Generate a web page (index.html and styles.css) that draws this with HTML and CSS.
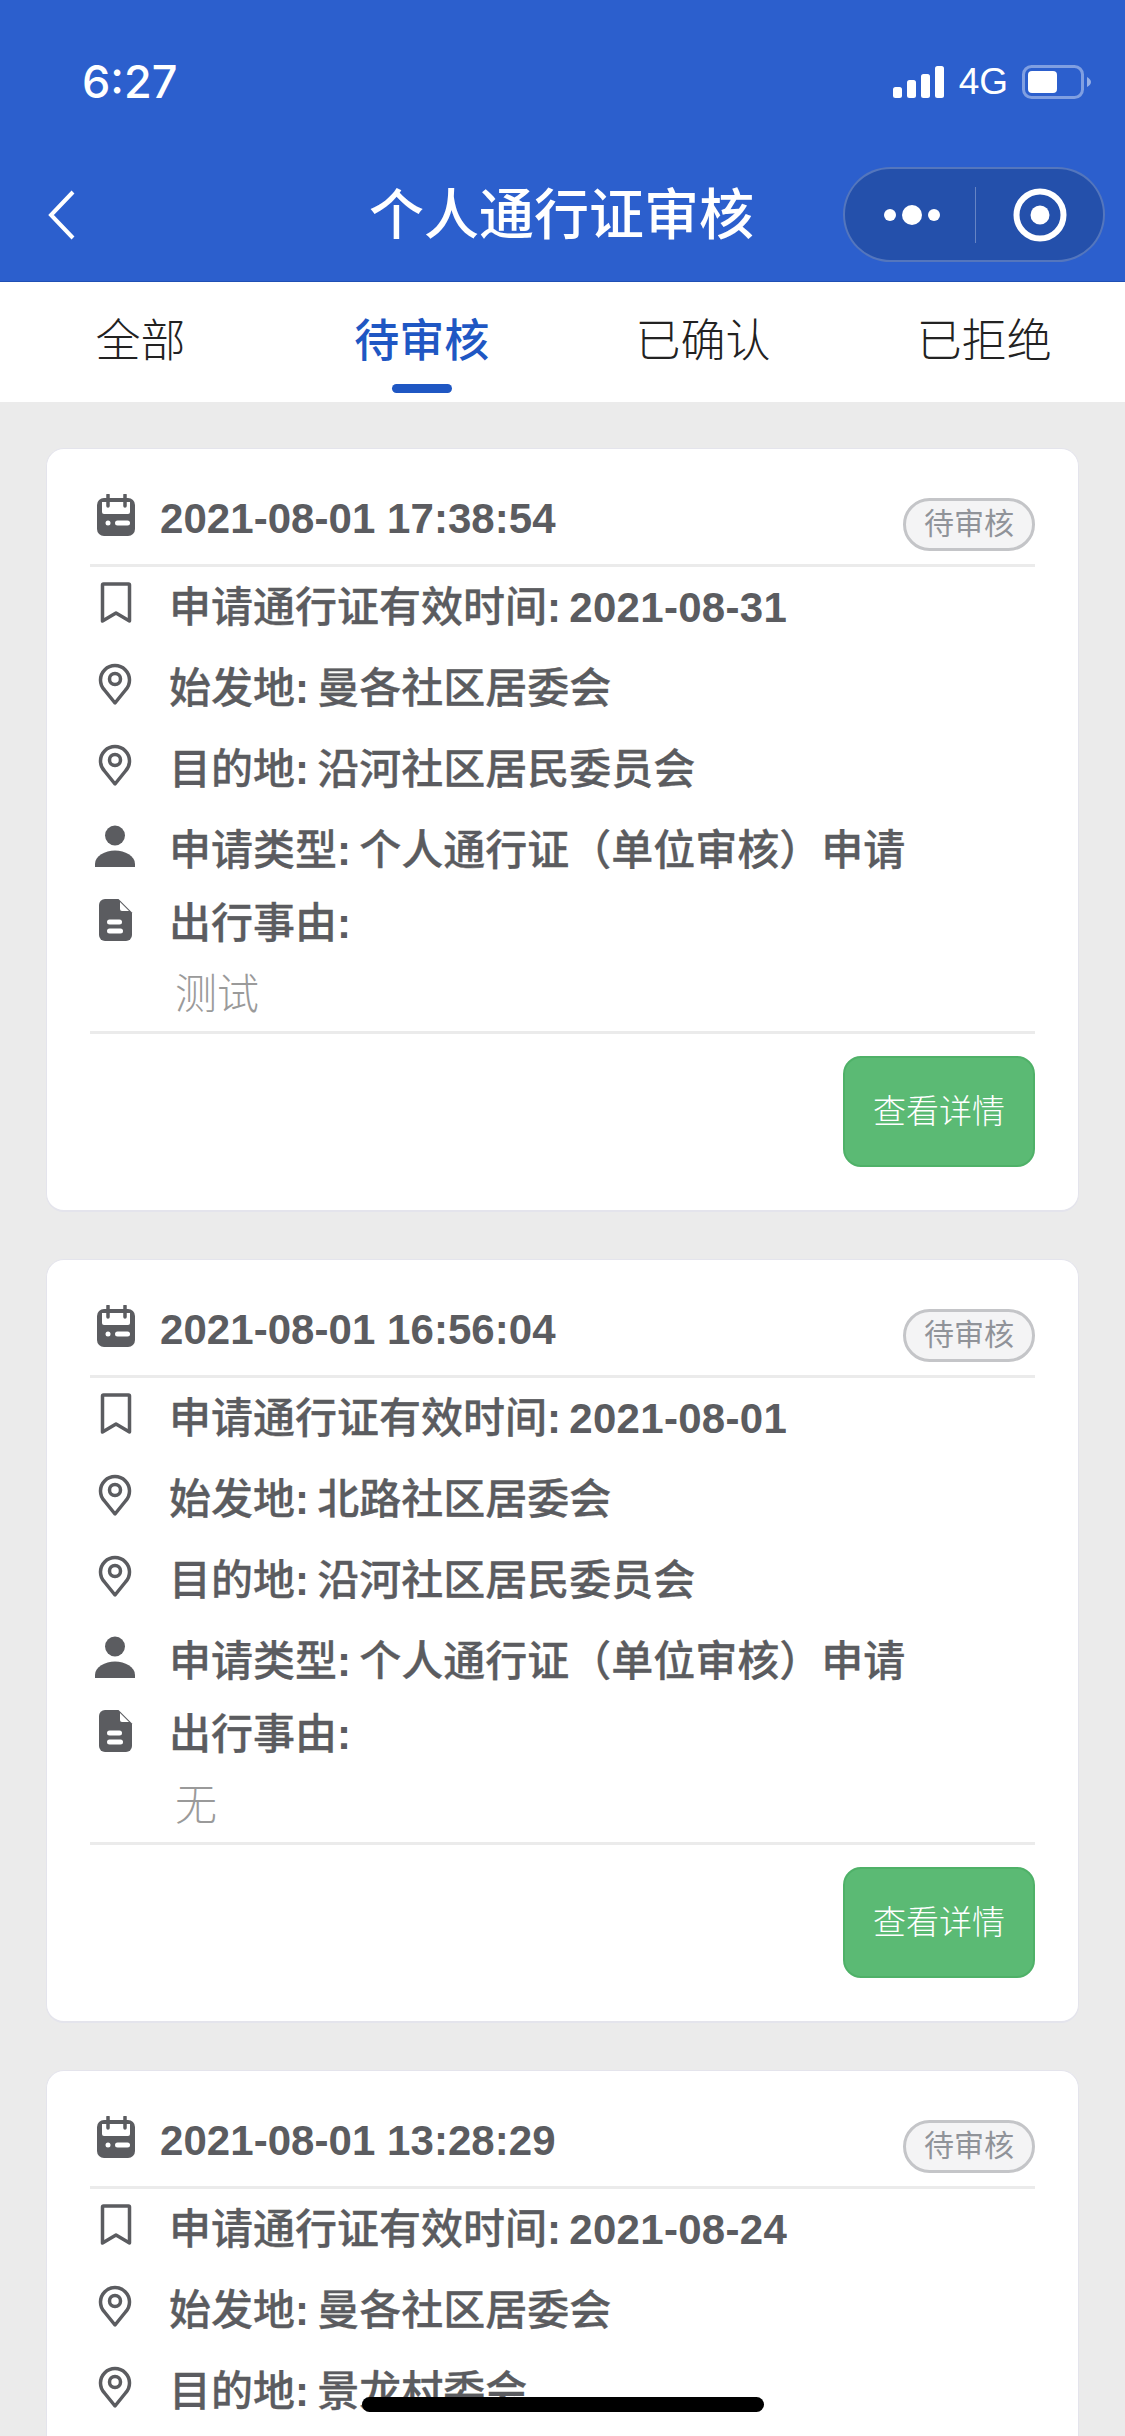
FILE: index.html
```html
<!DOCTYPE html>
<html lang="zh-CN">
<head>
<meta charset="utf-8">
<title>个人通行证审核</title>
<link rel="stylesheet" href="styles.css">
</head>
<body>
<svg class="defs" width="0" height="0" aria-hidden="true">
  <symbol id="i-cal" viewBox="0 0 42 42">
    <rect x="2" y="4" width="38" height="38" rx="7" fill="#5b5c60"/>
    <path d="M7 8h28v10a2 2 0 0 1-2 2H9a2 2 0 0 1-2-2z" fill="#fff"/>
    <path d="M13 1v11M30 1v11" stroke="#5b5c60" stroke-width="3.500" stroke-linecap="round"/>
    <circle cx="13" cy="29" r="2.500" fill="#fff"/>
    <rect x="20" y="26.500" width="15" height="5" rx="2.500" fill="#fff"/>
  </symbol>
  <symbol id="i-mark" viewBox="0 0 42 42">
    <path d="M9.500 2h25a1 1 0 0 1 1 1v36l-13.500-8-13.500 8V3a1 1 0 0 1 1-1z" fill="none" stroke="#5b5c60" stroke-width="3.500" stroke-linejoin="round"/>
  </symbol>
  <symbol id="i-pin" viewBox="0 0 42 42">
    <path d="M21 40L10.500 27a14.500 14.500 0 1 1 21 0z" fill="none" stroke="#5b5c60" stroke-width="3.500" stroke-linejoin="round"/>
    <circle cx="21" cy="16" r="5.500" fill="none" stroke="#5b5c60" stroke-width="3.500"/>
  </symbol>
  <symbol id="i-user" viewBox="0 0 42 42">
    <circle cx="21" cy="10.500" r="10" fill="#5b5c60"/>
    <path d="M1 42v-3c0-8 10-13.500 20-13.500S41 31 41 39v3z" fill="#5b5c60"/>
  </symbol>
  <symbol id="i-doc" viewBox="0 0 42 42">
    <path d="M11 0h13.500L38 13.500V36a6 6 0 0 1-6 6H11a6 6 0 0 1-6-6V6a6 6 0 0 1 6-6z" fill="#5b5c60"/>
    <path d="M26 3l9 9h-7a2 2 0 0 1-2-2z" fill="#fff"/>
    <rect x="13" y="20.500" width="15" height="5" rx="2.500" fill="#fff"/>
    <rect x="13" y="29.500" width="16" height="5" rx="2.500" fill="#fff"/>
  </symbol>
</svg>

<header class="top">
  <div class="status">
    <span class="time">6:27</span>
    <div class="status-right">
      <svg class="signal" width="51" height="32" viewBox="0 0 51 32"><rect x="0" y="21" width="9" height="11" rx="2.500"/><rect x="14" y="14" width="9" height="18" rx="2.500"/><rect x="28" y="8" width="9" height="24" rx="2.500"/><rect x="42" y="0" width="9" height="32" rx="2.500"/></svg>
      <span class="net">4G</span>
      <svg class="battery" width="69" height="34" viewBox="0 0 69 34"><rect x="1.500" y="1.500" width="59" height="31" rx="8" fill="none" stroke="#fff" stroke-opacity=".4" stroke-width="3"/><rect x="6" y="6" width="29" height="22" rx="4" fill="#fff"/><path d="M65 12c2 1 4 3 4 5s-2 4-4 5z" fill="#fff" fill-opacity=".5"/></svg>
    </div>
  </div>
  <nav class="nav">
    <svg class="back" width="30" height="52" viewBox="0 0 30 52"><path d="M26 3L4 26l22 23" fill="none" stroke="#fff" stroke-width="4"/></svg>
    <h1 class="title">个人通行证审核</h1>
    <div class="capsule">
      <svg class="cap-more" width="66" height="22" viewBox="0 0 66 22"><circle cx="8" cy="11" r="6"/><circle cx="30" cy="11" r="10"/><circle cx="52" cy="11" r="6"/></svg>
      <span class="cap-line"></span>
      <svg class="cap-target" width="54" height="54" viewBox="0 0 54 54"><circle cx="27" cy="27" r="23.500" fill="none" stroke="#fff" stroke-width="6"/><circle cx="27" cy="27" r="9.500" fill="#fff"/></svg>
    </div>
  </nav>
</header>

<div class="tabs">
  <div class="tab">全部</div>
  <div class="tab tab-on">待审核</div>
  <div class="tab">已确认</div>
  <div class="tab">已拒绝</div>
</div>

<main class="list">
  <article class="card">
    <div class="card-head">
      <svg class="ic ic-cal"><use href="#i-cal"/></svg>
      <span class="date">2021-08-01 17:38:54</span>
      <span class="badge">待审核</span>
    </div>
    <div class="row"><svg class="ic"><use href="#i-mark"/></svg><span>申请通行证有效时间<b class="v">: 2021-08-31</b></span></div>
    <div class="row"><svg class="ic"><use href="#i-pin"/></svg><span>始发地<b class="v">: </b>曼各社区居委会</span></div>
    <div class="row"><svg class="ic"><use href="#i-pin"/></svg><span>目的地<b class="v">: </b>沿河社区居民委员会</span></div>
    <div class="row"><svg class="ic"><use href="#i-user"/></svg><span>申请类型<b class="v">: </b>个人通行证（单位审核）申请</span></div>
    <div class="row row-reason"><svg class="ic"><use href="#i-doc"/></svg><span>出行事由<b class="v">:</b></span></div>
    <div class="reason">测试</div>
    <div class="card-foot"><button class="detail">查看详情</button></div>
  </article>

  <article class="card">
    <div class="card-head">
      <svg class="ic ic-cal"><use href="#i-cal"/></svg>
      <span class="date">2021-08-01 16:56:04</span>
      <span class="badge">待审核</span>
    </div>
    <div class="row"><svg class="ic"><use href="#i-mark"/></svg><span>申请通行证有效时间<b class="v">: 2021-08-01</b></span></div>
    <div class="row"><svg class="ic"><use href="#i-pin"/></svg><span>始发地<b class="v">: </b>北路社区居委会</span></div>
    <div class="row"><svg class="ic"><use href="#i-pin"/></svg><span>目的地<b class="v">: </b>沿河社区居民委员会</span></div>
    <div class="row"><svg class="ic"><use href="#i-user"/></svg><span>申请类型<b class="v">: </b>个人通行证（单位审核）申请</span></div>
    <div class="row row-reason"><svg class="ic"><use href="#i-doc"/></svg><span>出行事由<b class="v">:</b></span></div>
    <div class="reason">无</div>
    <div class="card-foot"><button class="detail">查看详情</button></div>
  </article>

  <article class="card">
    <div class="card-head">
      <svg class="ic ic-cal"><use href="#i-cal"/></svg>
      <span class="date">2021-08-01 13:28:29</span>
      <span class="badge">待审核</span>
    </div>
    <div class="row"><svg class="ic"><use href="#i-mark"/></svg><span>申请通行证有效时间<b class="v">: 2021-08-24</b></span></div>
    <div class="row"><svg class="ic"><use href="#i-pin"/></svg><span>始发地<b class="v">: </b>曼各社区居委会</span></div>
    <div class="row"><svg class="ic"><use href="#i-pin"/></svg><span>目的地<b class="v">: </b>景龙村委会</span></div>
  </article>
</main>

<div class="home-bar"></div>
</body>
</html>
```
FILE: styles.css
```css
* { box-sizing: border-box; }
html, body { margin: 0; padding: 0; }
body {
  width: 1125px;
  height: 2436px;
  overflow: hidden;
  position: relative;
  background: #ebebeb;
  font-family: "Liberation Sans", "Noto Sans CJK SC", sans-serif;
}
.defs { position: absolute; }

.top {
  height: 282px;
  background: #2c5fcd;
  border-bottom: 1px solid #1f4fb4;
  color: #fff;
}
.status {
  height: 164px;
  display: flex;
  align-items: flex-start;
  justify-content: space-between;
  padding: 56px 34px 0 82px;
}
.time {
  font-family: Inter, "Liberation Sans", sans-serif;
  font-size: 45px;
  font-weight: 500;
  line-height: 52px;
}
.status-right { display: flex; align-items: center; padding-top: 9px; }
.signal { fill: #fff; margin-right: 15px; }
.net { font-size: 37px; line-height: 34px; margin-right: 14px; }

.nav {
  height: 117px;
  display: flex;
  align-items: center;
  position: relative;
  padding: 0 20px 0 47px;
}
.back { margin-top: -16px; }
.title {
  position: absolute;
  left: 0;
  right: 2px;
  top: 20px;
  margin: 0;
  text-align: center;
  font-size: 55px;
  line-height: 62px;
  font-weight: 500;
}
.capsule {
  margin-left: auto;
  margin-top: -16px;
  width: 262px;
  height: 95px;
  display: flex;
  align-items: center;
  background: #2450ab;
  border: 2px solid rgba(255, 255, 255, .22);
  border-radius: 48px;
  padding-left: 37px;
}
.cap-more { fill: #fff; }
.cap-line {
  width: 1px;
  height: 56px;
  margin: 0 37px 0 27px;
  background: rgba(255, 255, 255, .3);
}

.tabs {
  height: 120px;
  display: flex;
  background: #fff;
}
.tab {
  flex: 1;
  position: relative;
  text-align: center;
  padding-top: 29px;
  font-size: 45px;
  line-height: 62px;
  color: #222;
  font-weight: 300;
}
.tab-on { color: #1f57c3; font-weight: 500; }
.tab-on::after {
  content: "";
  position: absolute;
  left: 50%;
  bottom: 9px;
  width: 60px;
  height: 9px;
  margin-left: -30px;
  border-radius: 5px;
  background: #1f57c3;
}

.list {
  padding: 46px 46px 0;
  display: flex;
  flex-direction: column;
  gap: 47px;
}
.card {
  flex: none;
  height: 764px;
  background: #fff;
  border: 1px solid #e4e4ec;
  border-bottom-width: 2px;
  border-radius: 18px;
  padding: 1px 43px 0;
}
.ic { width: 42px; height: 42px; flex: none; }
.card-head {
  height: 117px;
  display: flex;
  align-items: center;
  border-bottom: 3px solid #ebebeb;
  padding-left: 5px;
  padding-top: 24px;
}
.ic-cal { margin-bottom: 8px; margin-right: 23px; }
.date {
  font-size: 42px;
  font-weight: 700;
  color: #5b5c60;
  line-height: 50px;
  letter-spacing: .05px;
}
.badge {
  margin-left: auto;
  width: 132px;
  height: 53px;
  border: 3px solid #c4c5c8;
  border-radius: 27px;
  background: #f4f4f5;
  color: #909399;
  font-size: 30px;
  line-height: 45px;
  text-align: center;
  margin-top: 11px;
}
.row {
  height: 81px;
  display: flex;
  align-items: center;
  padding-left: 4px;
  font-size: 42px;
  font-weight: 500;
  color: #5b5c60;
  line-height: 50px;
  -webkit-text-stroke: .3px #5b5c60;
}
.row .ic { margin-right: 33px; margin-bottom: 9px; }
.v {
  font-weight: 700;
  word-spacing: -4px;
  letter-spacing: .3px;
  -webkit-text-stroke: 0;
}
.row-reason { height: 66px; }
.reason {
  height: 77px;
  border-bottom: 3px solid #ebebeb;
  padding: 10px 0 0 85px;
  font-size: 42px;
  line-height: 56px;
  font-weight: 200;
  color: #9a9a9a;
}
.card-foot {
  display: flex;
  justify-content: flex-end;
  padding-top: 22px;
}
.detail {
  width: 192px;
  height: 111px;
  background: #5bba74;
  border: 2px solid #4fb168;
  border-radius: 18px;
  color: #fff;
  font-family: inherit;
  font-size: 33px;
  font-weight: 300;
  padding: 0 0 5px;
}

.home-bar {
  position: absolute;
  left: 362px;
  top: 2397px;
  width: 402px;
  height: 15px;
  border-radius: 8px;
  background: #000;
}
```
